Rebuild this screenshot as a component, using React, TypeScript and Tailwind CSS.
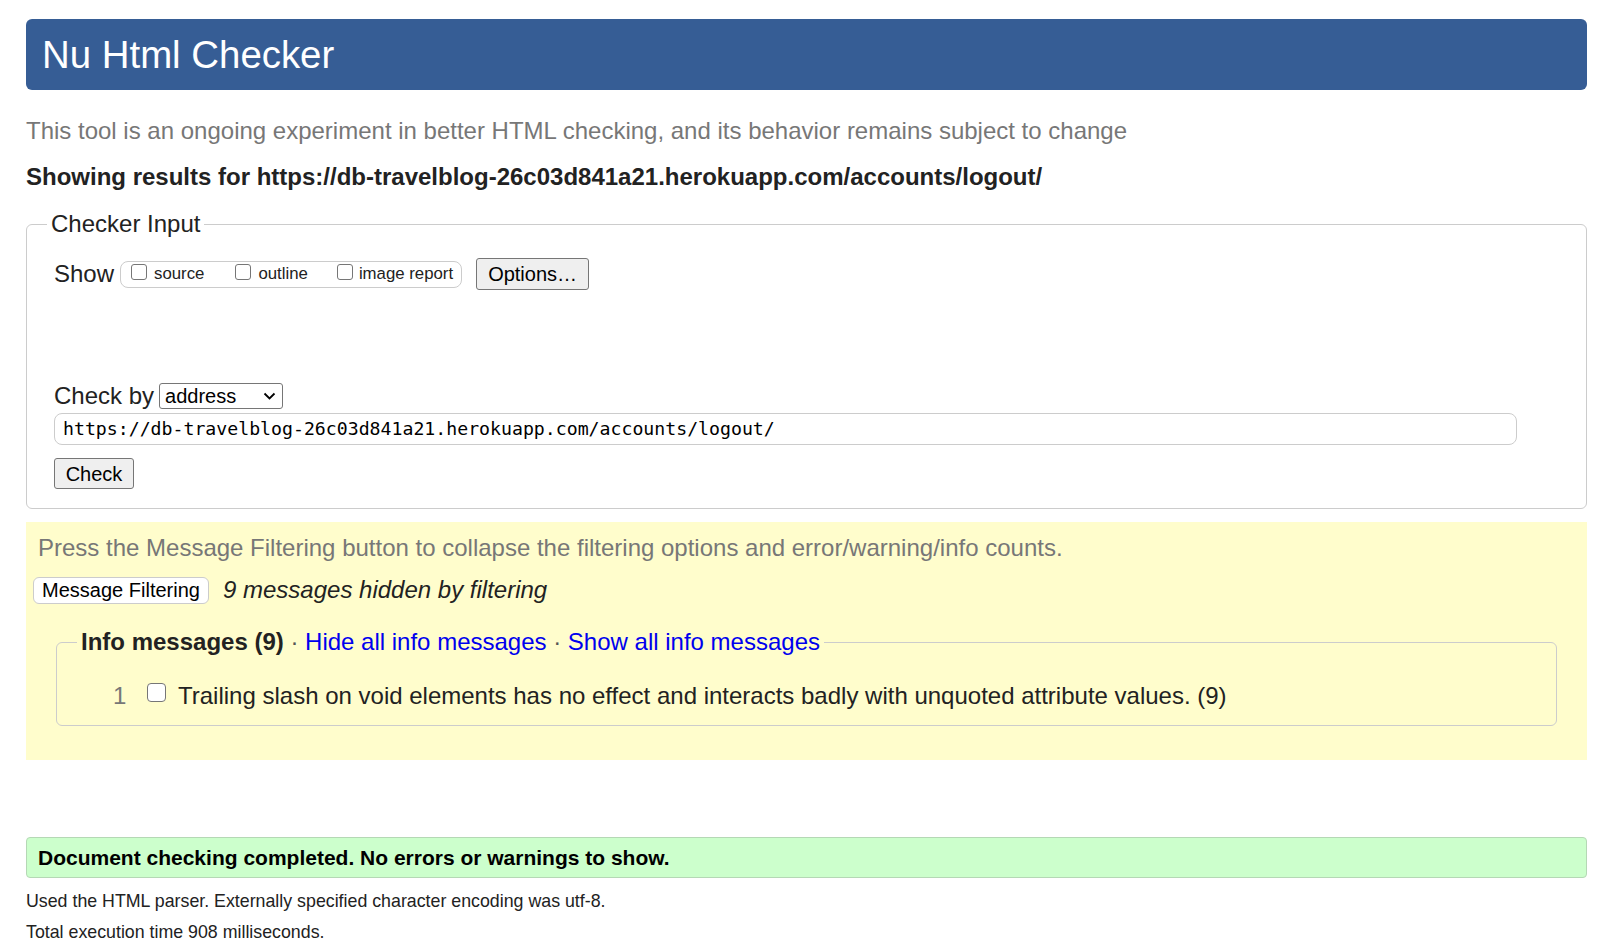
import React from "react";

const Box = ({ size = 16 }: { size?: number }) => (
  <span
    className={
      size === 16
        ? "inline-block w-[16px] h-[16px] rounded-[3px] border-[1.5px] border-[#767676] bg-white shrink-0"
        : "inline-block w-[19px] h-[19px] rounded-[4px] border-[1.5px] border-[#767676] bg-white shrink-0"
    }
  ></span>
);

const App: React.FC = () => {
  return (
    <div className="min-h-[947px] bg-white pl-[26px] pr-[10px] pt-[19px] font-['Liberation_Sans',Arial,sans-serif] text-[24px] text-[#222]">
      {/* header */}
      <h1 className="h-[71px] flex items-center pl-[16px] rounded-[6px] bg-[#365d95] text-white text-[38.4px] font-normal">
        Nu Html Checker
      </h1>
      <p className="mt-[27px] leading-[28px] text-[#777]">
        This tool is an ongoing experiment in better HTML checking, and its behavior remains subject to change
      </p>
      <p className="mt-[18px] leading-[28px] font-bold">
        Showing results for https://db-travelblog-26c03d841a21.herokuapp.com/accounts/logout/
      </p>

      {/* checker input */}
      <fieldset className="mt-[19px] border border-[#ccc] rounded-[6px] pl-[27px] pb-[17px]">
        <legend className="-ml-[7px] px-[4px] leading-[28px]">Checker Input</legend>
        <div className="mt-[20px] h-[32px] flex items-center">
          <span>Show</span>
          <div className="ml-[6px] h-[27px] flex items-center rounded-[8px] border border-[#ccc] pl-[10px] pr-[8px] text-[16.8px]">
            <label className="flex items-center gap-[7px]">
              <span className="-mt-[5px] flex"><Box /></span>
              <span>source</span>
            </label>
            <label className="ml-[31px] flex items-center gap-[7px]">
              <span className="-mt-[5px] flex"><Box /></span>
              <span>outline</span>
            </label>
            <label className="ml-[29px] flex items-center gap-[6px]">
              <span className="-mt-[5px] flex"><Box /></span>
              <span>image report</span>
            </label>
          </div>
          <button className="ml-[14px] h-[32px] w-[113px] rounded-[3px] border border-[#767676] bg-[#efefef] text-[20px] text-black">
            Options…
          </button>
        </div>

        <div className="mt-[92px] h-[28px] flex items-center">
          <span>Check by</span>
          <div className="ml-[5px] h-[26px] w-[124px] flex items-center justify-between rounded-[3px] border border-[#767676] bg-white pl-[5px] pr-[6px] text-[20px] text-black">
            <span>address</span>
            <svg width="13" height="8" viewBox="0 0 13 8" fill="none">
              <polyline points="1.5,1.5 6.5,6.5 11.5,1.5" stroke="#000" strokeWidth="1.8" />
            </svg>
          </div>
        </div>
        <div className="mt-[3px] h-[32px] w-[1463px] flex items-center rounded-[8px] border border-[#ccc] bg-white pl-[8px] font-['DejaVu_Sans_Mono',monospace] text-[18.2px] text-black">
          https://db-travelblog-26c03d841a21.herokuapp.com/accounts/logout/
        </div>
        <button className="mt-[13px] h-[31px] w-[80px] rounded-[3px] border border-[#767676] bg-[#efefef] text-[20px] text-black">
          Check
        </button>
      </fieldset>

      {/* filters */}
      <div className="mt-[13px] h-[238px] bg-[#fffdcc] pl-[7px] pr-[30px] pt-[12px]">
        <p className="pl-[5px] leading-[28px] text-[#777]">
          Press the Message Filtering button to collapse the filtering options and error/warning/info counts.
        </p>
        <div className="mt-[14px] h-[28px] flex items-center">
          <button className="h-[27px] w-[176px] rounded-[6px] border border-[#ccc] bg-white text-[20px] leading-[25px] text-black">
            Message Filtering
          </button>
          <span className="ml-[14px] italic">9 messages hidden by filtering</span>
        </div>
        <fieldset className="mt-[24px] ml-[23px] border border-[#ccc] rounded-[6px] pl-[27px] pb-[14px]">
          <legend className="-ml-[7px] px-[4px] leading-[28px]">
            <span className="font-bold">Info messages (9)</span>
            <span className="text-[#555]"> · </span>
            <a className="text-[#00e] cursor-pointer">Hide all info messages</a>
            <span className="text-[#555]"> · </span>
            <a className="text-[#00e] cursor-pointer">Show all info messages</a>
          </legend>
          <div className="mt-[25px] h-[30px] flex items-center">
            <span className="w-[40px] pl-[29px] text-[#777]">1</span>
            <span className="ml-[23px] -mt-[8px] flex"><Box size={19} /></span>
            <span className="ml-[12px]">
              Trailing slash on void elements has no effect and interacts badly with unquoted attribute values. (9)
            </span>
          </div>
        </fieldset>
      </div>

      {/* result */}
      <div className="mt-[77px] h-[41px] flex items-center rounded-[4px] border border-[#b5d8b5] bg-[#ccffcc] pl-[11px] text-[21px] font-bold text-black">
        Document checking completed. No errors or warnings to show.
      </div>
      <p className="mt-[9px] leading-[28px] text-[17.8px]">
        Used the HTML parser. Externally specified character encoding was utf-8.
      </p>
      <p className="mt-[3px] leading-[28px] text-[17.8px]">Total execution time 908 milliseconds.</p>
    </div>
  );
};

export default App;
